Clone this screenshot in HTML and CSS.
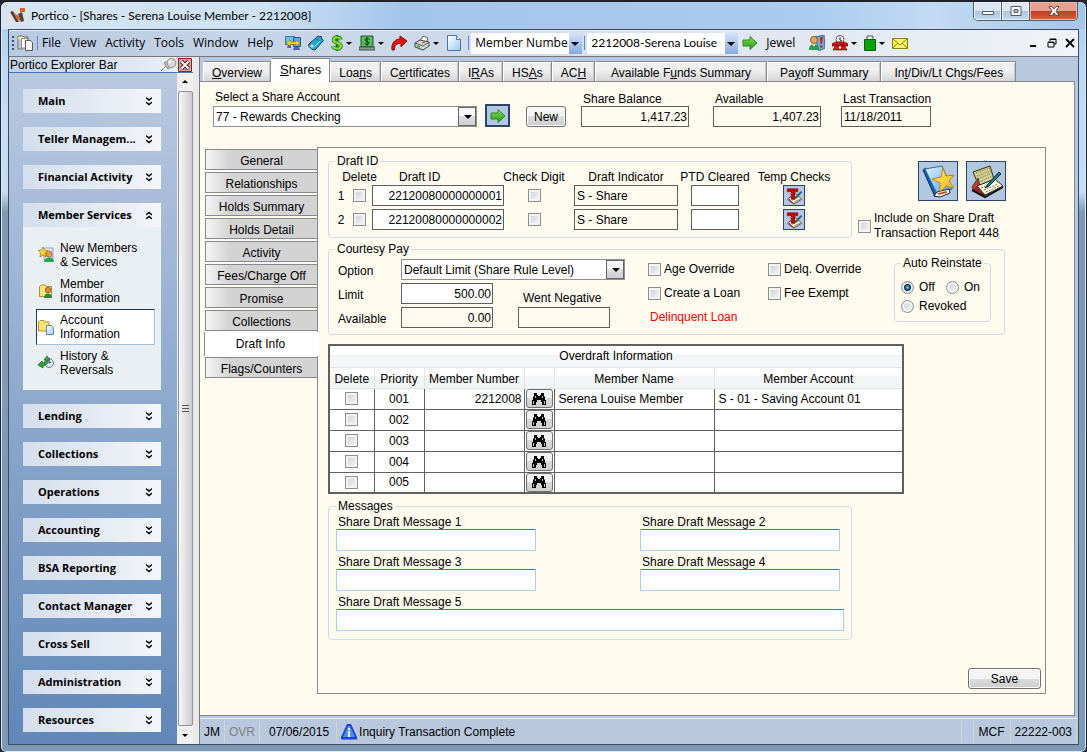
FILE: index.html
```html
<!DOCTYPE html>
<html lang="en">
<head>
<meta charset="utf-8">
<title>Portico - [Shares - Serena Louise Member - 2212008]</title>
<link rel="stylesheet" href="styles.css">
</head>
<body>
<svg class="sprites" width="0" height="0" aria-hidden="true">
  <defs>
    <linearGradient id="green" x1="0" y1="0" x2="0" y2="1"><stop offset="0" stop-color="#8ee04a"/><stop offset="1" stop-color="#1d9a1d"/></linearGradient>
    <linearGradient id="page" x1="0" y1="0" x2="1" y2="1"><stop offset="0" stop-color="#fff"/><stop offset="1" stop-color="#9fc8f4"/></linearGradient>
    <linearGradient id="book" x1="0" y1="0" x2="1" y2="1"><stop offset="0" stop-color="#e6f6ff"/><stop offset="1" stop-color="#4aa0e6"/></linearGradient>
    <linearGradient id="star" x1="0" y1="0" x2="1" y2="1"><stop offset="0" stop-color="#fff27a"/><stop offset="1" stop-color="#f4b414"/></linearGradient>
    <symbol id="i-down" viewBox="0 0 8 9"><path d="M1 0l3 2 3-2v1.500L4 4 1 1.500zM1 4.500l3 2 3-2V6L4 8.500 1 6z"/></symbol>
    <symbol id="i-up" viewBox="0 0 8 9"><path d="M1 4.500v-1.500L4 .5 7 3v1.500L4 2.500zM1 8.500V7l3-2.500L7 7v1.500L4 6.500z"/></symbol>
    <symbol id="i-go" viewBox="0 0 16 16"><path d="M1 5h7V1.500L15 8l-7 6.500V11H1z" fill="url(#green)" stroke="#2d8a2d"/></symbol>
    <symbol id="i-bino" viewBox="0 0 16 14"><path d="M3 1h3v2h1v1h2V3h1V1h3v3l1 1v3h1v5h-4v-3h-1V8H6v2H5v3H1V8h1V5l1-1z"/><path d="M4.500 4v2M2.500 9v3M11.500 4v2M13.500 9v3" stroke="#bbb" fill="none"/></symbol>
    <symbol id="i-temp" viewBox="0 0 20 20"><path d="M4 13l8-5 6 6-8 5z" fill="#fff7c4" stroke="#5b4a23"/><path d="M8 15l6-3M10 17l6-3" stroke="#8a8562"/><path d="M3 3h11v3h-3v8H7V6H3z" fill="#c80000" stroke="#7a0808" stroke-width=".6"/><path d="M11 13l7-7" stroke="#1b5e86" stroke-width="2"/><path d="M3 14l7 5" stroke="#a02020"/></symbol>
    <symbol id="i-user" viewBox="0 0 16 16"><path d="M6 1h9v12H6z" fill="url(#page)" stroke="#7693b8" stroke-width=".7"/><circle cx="11" cy="7" r="3" fill="#f09a3c" stroke="#9a5718" stroke-width=".6"/><path d="M6 15c0-6 10-6 10 0z" fill="#2fa648"/></symbol>
  </defs>
</svg>
<div class="window">
  <header class="titlebar">
    <svg class="app-icon" viewBox="0 0 16 16"><path d="M0 2h16v14H0z" fill="#e2e2e2"/><path d="M1 4l3-1 6 11H7zM9 6l4-2 2 9-3 1z" fill="#3f4650"/><path d="M5 5l5 3 2 6-4-3-3-5z" fill="#f0641e"/><path d="M11 0h5v4h-5z" fill="#f25a16"/></svg>
    <h1 class="title">Portico - [Shares - Serena Louise Member - 2212008]</h1>
    <div class="caption-buttons">
      <button class="cap" aria-label="Minimize"><svg viewBox="0 0 14 12"><path d="M1.500 6.500h11v3h-11z" fill="#fff" stroke="#555a66"/></svg></button>
      <button class="cap" aria-label="Maximize"><svg viewBox="0 0 14 12"><path d="M2 1.500h10v9H2z" fill="#fff" stroke="#555a66"/><path d="M5 4.500h4v3H5z" fill="#a8bcd4" stroke="#555a66"/></svg></button>
      <button class="cap cap-close" aria-label="Close"><svg viewBox="0 0 14 12"><path d="M2 1.500h3l2 2.500 2-2.500h3L9 6l3 4.500H9L7 8l-2 2.500H2L5 6z" fill="#fff" stroke="#6b4444"/></svg></button>
    </div>
  </header>

  <div class="client">
    <nav class="menubar">
      <span class="grip"></span>
      <svg class="icon doc-icon" viewBox="0 0 16 16"><path d="M0 4V2l2-1h4l1 1h4v3" fill="#e9e7b4" stroke="#6c6b46"/><path d="M1 4v10h5" fill="none" stroke="#7d7b55"/><path d="M4.500 3.500h6V13h-6z" fill="#fff" stroke="#888"/><path d="M8.500 5.500h5l2 2v8h-7z" fill="#fff" stroke="#5c5c5c"/></svg>
      <span class="sep"></span>
      <div class="menus">
        <button>File</button><button>View</button><button>Activity</button><button>Tools</button><button>Window</button><button>Help</button>
      </div>
      <div class="tools">
        <button aria-label="Switch workstation"><svg class="icon" viewBox="0 0 16 16"><path d="M.5 1.500h9v8h-9z" fill="#66c3fa" stroke="#3c6fa8"/><path d="M8.500 2.500h7v9h-7z" fill="#58a6f0" stroke="#31569a"/><path d="M3 10h3v3H2zM9 12h5l1 3H8z" fill="#4e62b8"/><path d="M1 8l4-3v2h6V5l4 3-4 3V9.500H5V11z" fill="#ffd91c" stroke="#9c7b00" stroke-width=".6"/></svg></button>
        <button aria-label="Calculator"><svg class="icon" viewBox="0 0 16 16"><path d="M1 9l9-8 2 1 1-1 1 3 1.500 1.500L7 15l-3-.5L.5 11z" fill="#22a5cf" stroke="#0b4b6a"/><path d="M6 12l6-6" stroke="#8be2f5"/><circle cx="4" cy="11" r="1.500" fill="#f1d8f3"/><path d="M9 4l2 2" stroke="#0b4b6a"/></svg></button>
        <button aria-label="Money"><svg class="icon icon-slim" viewBox="0 0 12 16"><path d="M6 0v16" stroke="#1f7a1f" stroke-width="2.600"/><path d="M10 5C9 2 3 1 2.500 5c0 3.500 7.500 2 7.500 6-.5 4-7.500 3-8.500 0" fill="none" stroke="#277f27" stroke-width="3.600"/><path d="M10 5C9 2 3 1 2.500 5c0 3.500 7.500 2 7.500 6-.5 4-7.500 3-8.500 0" fill="none" stroke="#8be228" stroke-width="2"/></svg><i class="caret"></i></button>
        <button aria-label="Cash drawer"><svg class="icon" viewBox="0 0 16 16"><path d="M2 1h12v11H2z" fill="#59b95d" stroke="#1b5a20"/><path d="M0 12h16v3H0z" fill="#8d9a8d" stroke="#3f4f3f"/><path d="M8 2v9M10.500 4.500C9 3 6 3.500 6 5s4 1.500 4 3-3 2-4.500.5" stroke="#053a08" fill="none"/></svg><i class="caret"></i></button>
        <button aria-label="Forward"><svg class="icon" viewBox="0 0 16 16"><path d="M1 15C0 8 4 4 9 4V1l7 5-6 6V8.500C6 8 3 10 3.500 15z" fill="#e11313" stroke="#8d0606"/></svg></button>
        <button aria-label="Print"><svg class="icon" viewBox="0 0 16 16"><path d="M6 6l3-5 5 2-2 5z" fill="#fff" stroke="#666"/><path d="M1 8l5-3 9 2v4l-6 4-8-3z" fill="#d4d4d4" stroke="#444"/><path d="M1 8l8 3 6-4" fill="none" stroke="#555"/><path d="M3 11l3 1" stroke="#28b428" stroke-width="1.500"/><path d="M8 8l3-1" stroke="#d22"/></svg><i class="caret"></i></button>
        <button aria-label="New page"><svg class="icon" viewBox="0 0 16 16"><path d="M1.500.5h9l4 4v11h-13z" fill="url(#page)" stroke="#4c73a9"/><path d="M10.500.5v4h4" fill="#fff" stroke="#4c73a9"/></svg></button>
      </div>
      <span class="sep"></span>
      <span class="combo combo-bar combo-key"><select aria-label="Search by"><option>Member Numbe</option></select></span>
      <span class="sep"></span>
      <span class="combo combo-bar combo-member"><select aria-label="Member"><option>2212008-Serena Louise</option></select></span>
      <button class="go" aria-label="Go"><svg class="icon" viewBox="0 0 16 16"><use href="#i-go"/></svg></button>
      <span class="who">Jewel</span>
      <div class="tools">
        <button aria-label="Member alert"><svg class="icon" viewBox="0 0 16 16"><path d="M6 2l9-2 1 13-6 3z" fill="#6fa9dc" stroke="#3d6796"/><path d="M11 2h3l-1 7h-1.500zM11 10.500h2.500v2H11z" fill="#dc1c1c"/><circle cx="5" cy="5" r="3.500" fill="#e9a558" stroke="#8c5a21"/><path d="M0 15c0-8 10-8 10 0z" fill="#2c9b46"/><path d="M3.500 9L5 12l1.500-3z" fill="#fff"/></svg></button>
        <button aria-label="Phone"><svg class="icon" viewBox="0 0 16 16"><circle cx="8" cy="4.500" r="4" fill="#fff" stroke="#555"/><path d="M8 2v3l2 1" stroke="#222" fill="none"/><path d="M0 9c3-3 13-3 16 0v2h-4v-1H4v1H0zM4 10h8l3 5H1z" fill="#d31111" stroke="#7d0707" stroke-width=".7"/><circle cx="8" cy="12.500" r="1.200" fill="#fff"/></svg><i class="caret"></i></button>
        <button aria-label="Bag"><svg class="icon icon-slim" viewBox="0 0 12 16"><path d="M3 4V1h6v3" fill="none" stroke="#555"/><path d="M.5 4.500h11v11H.5z" fill="#0ba20b" stroke="#056305"/></svg><i class="caret"></i></button>
        <button aria-label="Mail"><svg class="icon" viewBox="0 0 16 16"><path d="M.5 3.500h15v10H.5z" fill="#fff56a" stroke="#8a8100"/><path d="M1 4l7 6 7-6M1 13l5-5M15 13l-5-5" fill="none" stroke="#8a8100"/></svg></button>
      </div>
      <div class="mdi">
        <button aria-label="Minimize document"><svg viewBox="0 0 10 10"><path d="M1 7h6v2H1z"/></svg></button>
        <button aria-label="Restore document"><svg viewBox="0 0 10 10"><path d="M3 3V1h6v5H7M3 1.500h6M1 4h6v5H1zM1 4.500h6" fill="none" stroke="#000"/></svg></button>
        <button aria-label="Close document"><svg viewBox="0 0 10 10"><path d="M1 1l8 8M9 1L1 9" fill="none" stroke="#000" stroke-width="1.800"/></svg></button>
      </div>
    </nav>

    <div class="body">
      <aside class="explorer">
        <div class="explorer-head">
          <h2>Portico Explorer Bar</h2>
          <button class="pin" aria-label="Pin"><svg viewBox="0 0 16 14"><path d="M0 13l5-5" stroke="#888"/><path d="M3 5l4 6c2-1 3-2 3-4L6 4C5 4 4 4 3 5z" fill="#c9c9c9" stroke="#888"/><circle cx="10.500" cy="5" r="4.500" fill="#d9d9d9" stroke="#8a8a8a"/><circle cx="9" cy="3.500" r="1.500" fill="#fff"/></svg></button>
          <button class="x" aria-label="Close explorer"><svg viewBox="0 0 14 14"><path d="M.5.500h13v13H.5z" fill="#d99c98" stroke="#7d2720"/><path d="M3.500 3.500l7 7M10.500 3.500l-7 7" stroke="#4a1a18" stroke-width="4"/><path d="M3.500 3.500l7 7M10.500 3.500l-7 7" stroke="#fff" stroke-width="2"/></svg></button>
        </div>
        <div class="explorer-main">
          <div class="groups">
            <button class="group">Main<svg><use href="#i-down"/></svg></button>
            <button class="group">Teller Managem...<svg><use href="#i-down"/></svg></button>
            <button class="group">Financial Activity<svg><use href="#i-down"/></svg></button>
            <div class="open">
              <button class="group">Member Services<svg><use href="#i-up"/></svg></button>
              <ul class="links">
                <li><a href="#"><svg class="icon" viewBox="0 0 16 16"><use href="#i-user"/><path d="M5 0l1.500 3L10 3.500 7.500 6l.5 4-3-2-3 2 .5-4L0 3.500 3.500 3z" fill="url(#star)" stroke="#a06c00" stroke-width=".7"/></svg><span>New Members<br>&amp; Services</span></a></li>
                <li><a href="#"><svg class="icon" viewBox="0 0 16 16"><path d="M1.500 3.500l2-1.500h4l1 1.500h5v10h-12z" fill="#ffe680" stroke="#b39122"/><circle cx="10" cy="7" r="2.800" fill="#d8893a" stroke="#72411b" stroke-width=".6"/><path d="M6 15c0-6 8-6 8 0z" fill="#238c36"/></svg><span>Member<br>Information</span></a></li>
                <li><a href="#" class="current"><svg class="icon" viewBox="0 0 16 16"><path d="M.5 3L2 1.500h4L7 3h4v9H.5z" fill="#ffe27a" stroke="#b39122"/><path d="M8.500 6.500h5l2 2v7h-7z" fill="url(#page)" stroke="#5d86b8"/></svg><span>Account<br>Information</span></a></li>
                <li><a href="#"><svg class="icon" viewBox="0 0 16 16"><circle cx="11" cy="8" r="4.500" fill="#dfe6ee" stroke="#6b7988"/><path d="M11 5v3l2-1" fill="none" stroke="#334"/><path d="M0 10l4-4 1 2c3 0 3-2 3-3H6l3-4 3 4h-2c0 4-2 5-5 6v2z" fill="#31a53c" stroke="#14661d" stroke-width=".7"/></svg><span>History &amp;<br>Reversals</span></a></li>
              </ul>
            </div>
            <button class="group">Lending<svg><use href="#i-down"/></svg></button>
            <button class="group">Collections<svg><use href="#i-down"/></svg></button>
            <button class="group">Operations<svg><use href="#i-down"/></svg></button>
            <button class="group">Accounting<svg><use href="#i-down"/></svg></button>
            <button class="group">BSA Reporting<svg><use href="#i-down"/></svg></button>
            <button class="group">Contact Manager<svg><use href="#i-down"/></svg></button>
            <button class="group">Cross Sell<svg><use href="#i-down"/></svg></button>
            <button class="group">Administration<svg><use href="#i-down"/></svg></button>
            <button class="group">Resources<svg><use href="#i-down"/></svg></button>
          </div>
          <div class="scroll"><i class="caret caret-up"></i><div class="thumb"><span class="ridges"></span></div><i class="caret"></i></div>
        </div>
      </aside>

      <div class="work">
        <nav class="tabs">
          <button><u>O</u>verview</button><button class="active"><u>S</u>hares</button><button>Loa<u>n</u>s</button><button>C<u>e</u>rtificates</button><button>I<u>R</u>As</button><button>HS<u>A</u>s</button><button>AC<u>H</u></button><button>Available F<u>u</u>nds Summary</button><button>Pa<u>y</u>off Summary</button><button>In<u>t</u>/Div/Lt Chgs/Fees</button>
        </nav>
        <main class="sheet">
          <section class="account">
            <div class="field account-pick">
              <label for="acct">Select a Share Account</label>
              <span class="combo"><select id="acct"><option>77 - Rewards Checking</option></select></span>
            </div>
            <button class="tile tile-go" aria-label="Go to account"><svg class="icon" viewBox="0 0 16 16"><use href="#i-go"/></svg></button>
            <button class="btn">New</button>
            <div class="balances">
              <div class="field"><label for="bal">Share Balance</label><input id="bal" class="box money ro" readonly value="1,417.23"></div>
              <div class="field"><label for="avail">Available</label><input id="avail" class="box money ro" readonly value="1,407.23"></div>
              <div class="field last"><label for="last">Last Transaction</label><input id="last" class="box ro" readonly value="11/18/2011"></div>
            </div>
          </section>

          <div class="detail">
            <nav class="side-tabs">
              <button>General</button><button>Relationships</button><button>Holds Summary</button><button>Holds Detail</button><button>Activity</button><button>Fees/Charge Off</button><button>Promise</button><button>Collections</button><button class="active">Draft Info</button><button>Flags/Counters</button>
            </nav>
            <section class="panel">
              <div class="top">
                <fieldset class="draft">
                  <legend>Draft ID</legend>
                  <div class="draft-grid">
                    <span></span><span>Delete</span><span class="draft-label">Draft ID</span><span>Check Digit</span><span>Draft Indicator</span><span>PTD Cleared</span><span>Temp Checks</span>
                    <span>1</span><input type="checkbox" aria-label="Delete 1"><input class="box money" aria-label="Draft ID 1" value="22120080000000001"><input type="checkbox" aria-label="Check digit 1"><input class="box ro indicator" readonly aria-label="Draft indicator 1" value="S - Share"><input class="box ptd" aria-label="PTD cleared 1"><button class="tile tile-small" aria-label="Temp checks 1"><svg viewBox="0 0 20 20"><use href="#i-temp"/></svg></button>
                    <span>2</span><input type="checkbox" aria-label="Delete 2"><input class="box money" aria-label="Draft ID 2" value="22120080000000002"><input type="checkbox" aria-label="Check digit 2"><input class="box ro indicator" readonly aria-label="Draft indicator 2" value="S - Share"><input class="box ptd" aria-label="PTD cleared 2"><button class="tile tile-small" aria-label="Temp checks 2"><svg viewBox="0 0 20 20"><use href="#i-temp"/></svg></button>
                  </div>
                </fieldset>
                <div class="report">
                  <div class="report-tiles">
                    <button class="tile tile-big" aria-label="Favorites"><svg viewBox="0 0 38 38"><path d="M4 8l3-2 11 24-2 5z" fill="#155eac" stroke="#0d2f5c"/><path d="M6 7l17-3 10 23-15 5z" fill="url(#book)" stroke="#2a6db0"/><path d="M15 34l3-4 12-3 1 4-10 4z" fill="#fff" stroke="#222"/><path d="M19 32l9-2" stroke="#b8593b" stroke-width="2"/><path d="M24 6l3 8 8-1-5 6 5 7-8-2-6 6v-9l-8-4 9-2z" fill="url(#star)" stroke="#c08212"/></svg></button>
                    <button class="tile tile-big" aria-label="Write check"><svg viewBox="0 0 38 38"><path d="M6 10l17-6 4 13-15 7z" fill="#d2cf96" stroke="#2f2f16"/><path d="M9 11l14-5M10 14l14-5M11 17l14-6M12 20l14-6" stroke="#77743f" stroke-dasharray="1 1"/><path d="M5 25l6-9 2 8-6 5z" fill="#d33030" stroke="#206020"/><path d="M6 27l9-4 10 7-8 4z" fill="#a02020"/><path d="M10 24l18-7 8 7-18 9z" fill="#ffffd8" stroke="#222"/><path d="M5 28l13 7 18-10" fill="none" stroke="#111" stroke-width="2"/><path d="M14 26l10-4M17 28l14-6M19 30l13-6" stroke="#777" stroke-dasharray="2 1"/><path d="M18 26l3-4L32 10l2 2-12 12z" fill="#178a7d" stroke="#101c66"/></svg></button>
                  </div>
                  <label class="check report-check"><input type="checkbox"><span>Include on Share Draft<br>Transaction Report 448</span></label>
                </div>
              </div>

              <fieldset class="courtesy">
                <legend>Courtesy Pay</legend>
                <div class="pay">
                  <label for="opt">Option</label>
                  <span class="combo pay-option"><select id="opt"><option>Default Limit (Share Rule Level)</option></select></span>
                  <label for="limit">Limit</label><input id="limit" class="box money" value="500.00">
                  <label for="neg" class="went">Went Negative</label>
                  <label for="cpav">Available</label><input id="cpav" class="box money ro" readonly value="0.00">
                  <input id="neg" class="box ro neg" readonly>
                </div>
                <div class="flags">
                  <label class="check"><input type="checkbox">Age Override</label>
                  <label class="check"><input type="checkbox">Delq. Override</label>
                  <label class="check"><input type="checkbox">Create a Loan</label>
                  <label class="check"><input type="checkbox">Fee Exempt</label>
                  <span class="alert">Delinquent Loan</span>
                </div>
                <fieldset class="reinstate">
                  <legend>Auto Reinstate</legend>
                  <div class="radios">
                    <label class="check"><input type="radio" name="re" checked>Off</label>
                    <label class="check"><input type="radio" name="re">On</label>
                    <label class="check"><input type="radio" name="re">Revoked</label>
                  </div>
                </fieldset>
              </fieldset>

              <table class="overdraft">
                <colgroup><col class="c-del"><col class="c-pri"><col class="c-num"><col class="c-find"><col class="c-name"><col class="c-acct"></colgroup>
                <thead>
                  <tr><th colspan="6">Overdraft Information</th></tr>
                  <tr><th>Delete</th><th>Priority</th><th>Member Number</th><th></th><th>Member Name</th><th>Member Account</th></tr>
                </thead>
                <tbody>
                  <tr><td><input type="checkbox" aria-label="Delete 001"></td><td>001</td><td class="num">2212008</td><td><button class="find" aria-label="Find"><svg><use href="#i-bino"/></svg></button></td><td class="txt">Serena Louise Member</td><td class="txt">S - 01 - Saving Account 01</td></tr>
                  <tr><td><input type="checkbox" aria-label="Delete 002"></td><td>002</td><td></td><td><button class="find" aria-label="Find"><svg><use href="#i-bino"/></svg></button></td><td></td><td></td></tr>
                  <tr><td><input type="checkbox" aria-label="Delete 003"></td><td>003</td><td></td><td><button class="find" aria-label="Find"><svg><use href="#i-bino"/></svg></button></td><td></td><td></td></tr>
                  <tr><td><input type="checkbox" aria-label="Delete 004"></td><td>004</td><td></td><td><button class="find" aria-label="Find"><svg><use href="#i-bino"/></svg></button></td><td></td><td></td></tr>
                  <tr><td><input type="checkbox" aria-label="Delete 005"></td><td>005</td><td></td><td><button class="find" aria-label="Find"><svg><use href="#i-bino"/></svg></button></td><td></td><td></td></tr>
                </tbody>
              </table>

              <fieldset class="messages">
                <legend>Messages</legend>
                <div class="message-grid">
                  <div class="message"><label for="m1">Share Draft Message 1</label><input id="m1"></div>
                  <div class="message"><label for="m2">Share Draft Message 2</label><input id="m2"></div>
                  <div class="message"><label for="m3">Share Draft Message 3</label><input id="m3"></div>
                  <div class="message"><label for="m4">Share Draft Message 4</label><input id="m4"></div>
                  <div class="message wide"><label for="m5">Share Draft Message 5</label><input id="m5"></div>
                </div>
              </fieldset>
              <button class="btn save">Save</button>
            </section>
          </div>
        </main>
        <footer class="status">
          <span>JM</span><span class="off">OVR</span><span class="date">07/06/2015</span>
          <span class="note"><svg class="icon" viewBox="0 0 16 16"><path d="M6 0h4l6 13v2.500H0V13z" fill="#1746d8"/><path d="M7 2h2l5 11H2z" fill="#4f8df5"/><path d="M7 7h2v6H7zM7 4h2v2H7z" fill="#fff"/></svg>Inquiry Transaction Complete</span>
          <span class="blank"></span><span class="wide-cell">MCF</span><span>22222-003</span>
        </footer>
      </div>
    </div>
  </div>
</div>
</body>
</html>
```
FILE: styles.css
```css
* { box-sizing: border-box; }
body {
  margin: 0;
  font: 12px/14px "Liberation Sans", Arial, sans-serif;
  color: #000;
  background: #23272e;
}
button, input, select { font: inherit; color: inherit; margin: 0; }
button { padding: 0; border: 0; background: none; }
svg { display: block; flex: none; }
.sprites { position: absolute; }
.icon { width: 16px; height: 16px; }
.icon-slim { width: 12px; }

/* window frame */
.window {
  min-height: 100vh;
  display: flex;
  flex-direction: column;
  padding: 0 7px 7px;
  border: 1px solid #1e232b;
  border-top-width: 2px;
  border-radius: 7px 7px 6px 6px;
  background: linear-gradient(#a9c8ea 0, #bcd9f5 60px, #c5def6 190px, #8199b4 210px, #7e99b5 100%);
  box-shadow: inset 0 0 0 1px #d9e9f8;
}
.titlebar { display: flex; align-items: center; height: 27px; margin: 0 -6px; padding-left: 7px; background: linear-gradient(90deg, #d6e4f3 0, #cfe2f5 260px, #a4c5ea 400px, #abccee 75%, #c3daf2 86%, #a5c5e8 100%); border-radius: 6px 6px 0 0; }
.app-icon { width: 16px; height: 16px; margin-right: 6px; }
.title { margin: 0; font: 12px/16px Lato, "Noto Sans", sans-serif; }
.caption-buttons { display: flex; align-self: flex-start; margin: 0 7px 0 auto; height: 19px; border: 1px solid #4d5f75; border-top: 0; border-radius: 0 0 5px 5px; overflow: hidden; }
.cap { display: grid; place-items: center; width: 28px; border-right: 1px solid #4d5f75; background: linear-gradient(#dde8f4 50%, #adc4dd 50%, #c4d9ee); box-shadow: inset 0 0 0 1px #e8f1fa; }
.cap svg { width: 14px; height: 12px; }
.cap-close { width: 47px; border: 0; background: linear-gradient(#e5a090 50%, #c23a22 50%, #d8633c); box-shadow: inset 0 0 0 1px #eab9a8; }
.client { flex: 1; display: flex; flex-direction: column; border: 1px solid #3f4c5c; background: #b8c9df; }

/* menu bar */
.menubar { display: flex; align-items: center; height: 27px; padding-left: 3px; border-bottom: 1px solid #777; background: linear-gradient(90deg, #b8cae2, #f0f3f7); font: 12px/16px "Open Sans", "Noto Sans", sans-serif; box-shadow: inset 0 1px #e4edf7; }
.grip { width: 2px; height: 15px; background: repeating-linear-gradient(#34507f 0 2px, #0000 2px 4px); margin-right: 3px; }
.doc-icon { margin-right: 2px; }
.sep { width: 1px; height: 14px; margin: 0 2px; background: #5d8ac6; }
.menus { display: flex; gap: 9px; padding: 0 12px 0 2px; }
.tools, .tools button { display: flex; align-items: center; }
.tools { gap: 7px; padding-right: 4px; }
.tools button { gap: 3px; }
.caret { width: 0; border: 3px solid #0000; border-top: 3px solid #000; border-bottom: 0; }
.caret-up { transform: rotate(180deg); }
.combo { position: relative; display: block; height: 21px; }
.combo select { width: 100%; height: 100%; appearance: none; padding: 0 20px 0 2px; border: 1px solid #8d9096; border-radius: 0; background: #fff; outline: 0; }
.combo::before { content: ""; position: absolute; z-index: 1; top: 1px; right: 1px; bottom: 1px; width: 16px; border: 1px solid #666; background: linear-gradient(#f6f6f6 50%, #ddd 50%, #cfcfcf); pointer-events: none; }
.combo::after { content: ""; position: absolute; z-index: 2; top: 9px; right: 5px; border: 4px solid #0000; border-top-color: #000; border-bottom: 0; pointer-events: none; }
.combo-bar select { border: 0; padding: 0 14px 0 4px; }
.combo-bar::before { top: 0; right: 0; bottom: 0; width: 13px; border: 0; background: linear-gradient(#d4e3fa, #86abe0); }
.combo-bar::after { right: 3px; }
.combo-key { width: 111px; }
.combo-member { width: 151px; }
.combo-member select { font-family: Lato, "Noto Sans", sans-serif; }
.go { margin: 0 8px 0 4px; }
.who { margin-right: 14px; }
.mdi { display: flex; gap: 8px; margin-left: auto; padding-right: 3px; }
.mdi svg { width: 10px; height: 10px; }

/* explorer */
.body { flex: 1; display: flex; gap: 6px; background: #e9e9e9; }
.explorer { flex: none; width: 184px; display: flex; flex-direction: column; }
.explorer-head { display: flex; align-items: center; height: 16px; padding: 0 1px; border-bottom: 1px solid #4a78b5; background: linear-gradient(90deg, #c2d2e7, #eef2f8); }
.explorer-head h2 { margin: 0 auto 0 0; font: inherit; }
.pin svg { width: 16px; height: 14px; margin-right: 1px; }
.x svg { width: 14px; height: 14px; }
.explorer-main { flex: 1; display: flex; }
.groups { flex: 1; display: flex; flex-direction: column; gap: 14px; padding: 16px 16px 12px 14px; background: linear-gradient(#b9c9e0, #6087b8); }
.group { display: flex; align-items: center; justify-content: space-between; width: 100%; height: 24px; padding: 0 8px 0 15px; background: linear-gradient(90deg, #d4deec, #f3f5f9); font: bold 11px/14px "Open Sans", "Noto Sans", sans-serif; }
.group svg { width: 8px; height: 9px; }
.open { background: #e9eff2; }
.links { list-style: none; margin: 0; padding: 10px 6px 9px 13px; }
.links a { display: flex; gap: 6px; align-items: center; height: 36px; padding: 0 1px; border: 1px solid #0000; color: inherit; text-decoration: none; }
.links .current { background: #fff; border-color: #26374d #a9bedb #a9bedb #26374d; }
.scroll { width: 16px; display: flex; flex-direction: column; align-items: center; padding: 7px 0; gap: 8px; background: #efefef; }
.thumb { flex: 1; display: grid; place-items: center; width: 15px; border: 1px solid #8f9298; border-radius: 2px; background: linear-gradient(90deg, #f7f7f7, #cbcbd0); }
.ridges { width: 7px; height: 7px; background: repeating-linear-gradient(#555 0 1px, #0000 1px 3px); }

/* work area */
.work { flex: 1; min-width: 0; display: flex; flex-direction: column; border-left: 1px solid #777; background: #b8c9df; }
.tabs { display: flex; align-items: flex-end; height: 24px; padding: 1px 0 0 3px; }
.tabs button { height: 21px; margin-bottom: -1px; padding: 2px 8px 0; border: 1px solid #858992; border-left-color: #fff; border-bottom: 0; box-shadow: inset 0 1px #fff, inset -1px 0 #c8c8c8; background: linear-gradient(#f0f0f0 40%, #d3d3d3); white-space: nowrap; }
.tabs .active { position: relative; height: 24px; padding: 0 8px 2px; background: #fff; box-shadow: none; font-size: 13px; }
.tabs button:nth-child(8) { padding: 2px 15px 0; }
.tabs button:nth-child(n+9) { padding: 2px 12px 0; }
.sheet { flex: 1; display: flex; flex-direction: column; margin: 0 3px 2px 0; padding: 8px 28px 21px 4px; border: 1px solid #858992; border-left: 0; background: #fffbef; }
.account { display: flex; align-items: flex-end; padding-left: 9px; }
.field { display: flex; flex-direction: column; }
.field label { padding: 0 0 0 2px; }
.account-pick { width: 264px; gap: 2px; }
.tile { display: grid; place-items: center; border: 1px solid #2b4468; background: #b4c7e0; }
.tile-go { width: 25px; height: 23px; margin: 0 16px 0 8px; border-width: 2px; }
.tile-small { width: 22px; height: 21px; }
.tile-small svg { width: 20px; height: 19px; }
.tile-big { width: 40px; height: 40px; }
.tile-big svg { width: 38px; height: 38px; }
.btn { width: 40px; height: 21px; border: 1px solid #707070; border-radius: 3px; background: linear-gradient(#f4f4f4 50%, #dcdcdc 50%, #cecece); box-shadow: inset 0 0 0 1px #fbfbfb; font-size: 12px; }
.balances { display: flex; gap: 24px; margin-left: 15px; }
.balances .field { width: 108px; }
.balances .last { width: 90px; margin-left: -4px; white-space: nowrap; }
.box { width: 100%; min-width: 0; height: 21px; padding: 0 2px; border: 1px solid #5e5e5e; border-radius: 0; background: #fff; outline: 0; }
.ro { background: #fffbef; }
.money { text-align: right; padding-right: 1px; }
input[type="checkbox"], input[type="radio"] { appearance: none; flex: none; width: 13px; height: 13px; border: 1px solid #8e8f8f; background: linear-gradient(135deg, #c9ced6, #f8f8f8); box-shadow: inset 0 0 0 2px #f2f2f2; }
input[type="radio"] { border-radius: 50%; }
input[type="radio"]:checked { background: radial-gradient(circle at 50% 50%, #8fd6f5 0, #15608c 2px, #0b2b45 3px, #e8e8e8 4px); box-shadow: none; }

.detail { flex: 1; display: flex; margin-top: 20px; }
.side-tabs { flex: none; width: 113px; padding-top: 2px; }
.side-tabs button { display: block; width: 112px; height: 21px; margin: 0 0 2px 1px; padding-top: 2px; border: 1px solid #858992; border-width: 1px 0 1px 1px; background: linear-gradient(90deg, #f4f4f4, #d3d3d3 24px); }
.side-tabs .active { position: relative; width: 115px; height: 24px; margin: -1px 0 1px; padding: 0 3px 0 0; border-width: 0 0 0 1px; background: #fff; }
.panel { flex: 1; min-width: 0; display: flex; flex-direction: column; padding: 6px 4px 4px 10px; border: 1px solid #858992; }
fieldset { min-width: 0; margin: 0; padding: 0 6px; border: 1px solid #d0dbe8; border-radius: 4px; }
legend { padding: 0 2px; white-space: nowrap; }
.top { display: flex; gap: 6px; }
.draft { width: 524px; height: 84px; }
.draft-grid { display: grid; grid-template-columns: 12px 25px 132px 60px 124px 54px 104px; grid-auto-rows: 21px; row-gap: 3px; align-items: center; justify-items: center; white-space: nowrap; margin-top: -7px; }
.draft-grid > span:nth-child(-n+7) { align-self: end; margin-bottom: -2px; }
.draft-grid .draft-label { justify-self: start; padding-left: 27px; }
.indicator { width: 104px; }
.ptd { width: 48px; }
.report { width: 148px; padding-top: 7px; }
.report-tiles { display: flex; gap: 8px; justify-content: flex-end; margin-bottom: 10px; }
.check { display: flex; align-items: center; gap: 3px; }
.report-check { line-height: 15px; white-space: nowrap; }
.courtesy { display: flex; width: 677px; height: 93px; margin-top: 1px; }
.pay { display: grid; grid-template-columns: 66px 92px 25px 92px 15px; grid-auto-rows: 21px; row-gap: 3px; align-items: center; margin-top: 3px; }
.pay label { grid-column: 1; padding: 3px 0 0 3px; }
.pay .money { grid-column: 2; }
.pay .pay-option { grid-column: 2 / -1; width: 224px; }
.pay .went { grid-column: 4; padding: 8px 0 0 5px; white-space: nowrap; }
.pay .neg { grid-column: 4; }
.flags { display: grid; grid-template-columns: 120px 120px; grid-auto-rows: 24px; align-content: start; align-items: center; margin: 1px 6px 0 23px; }
.flags .alert { padding-left: 2px; color: #f00; }
.reinstate { width: 97px; height: 66px; padding: 0 6px; }
.radios { display: grid; grid-template-columns: 45px 1fr; row-gap: 5px; margin-top: 10px; white-space: nowrap; }
.radios .check { gap: 5px; }
.radios .check:last-child { grid-column: 1 / -1; }

.overdraft { width: 576px; margin: 9px 0 0; table-layout: fixed; border-collapse: collapse; border: 2px solid #606060; background: #fff; text-align: center; }
.overdraft th { height: 22px; padding: 0; font-weight: normal; border: 1px solid #e2e4e8; background: linear-gradient(#fff 40%, #f4f5f7 41%, #f3f4f6); }
.overdraft thead tr:last-child th { height: 21px; padding-top: 2px; }
.overdraft td { height: 21px; padding: 0; border: 1px solid #606060; }
.overdraft input { display: block; margin: 0 auto; }
.overdraft .num { text-align: right; padding-right: 2px; }
.overdraft .txt { text-align: left; padding-left: 4px; }
.c-del { width: 45px; } .c-pri { width: 50px; } .c-num { width: 100px; } .c-find { width: 30px; } .c-name { width: 160px; }
.find { display: grid; place-items: center; width: 27px; height: 19px; margin: 0 auto; border: 1px solid #707070; border-radius: 3px; background: linear-gradient(#f2f2f2 50%, #d8d8d8 50%, #d0d0d0); }
.find svg { width: 16px; height: 14px; }

.messages { width: 524px; height: 141px; margin-top: 5px; padding: 0 7px; }
.message-grid { display: grid; grid-template-columns: 200px 204px; justify-content: space-between; row-gap: 4px; margin-top: 2px; }
.message label { display: block; padding-left: 2px; }
.message input { display: block; width: 200px; height: 22px; border: 1px solid #abcfe8; border-top-color: #3d7bad; border-radius: 1px; background: #fff; outline: 0; }
.message.wide { grid-column: 1 / -1; }
.wide input { width: 100%; }
.save { width: 73px; margin: auto 0 0 auto; }

.status { display: flex; align-items: center; height: 26px; border-top: 1px solid #eef2f8; padding: 2px 1px 2px 0; }
.status > span { display: flex; align-items: center; height: 22px; padding: 0 4px; border-right: 1px solid #d3d3cf; }
.status .off { color: #808080; }
.status .date { padding: 0 7px 0 9px; }
.status .note { flex: 1; gap: 2px; }
.status .blank { width: 12px; padding: 0; }
.status .wide-cell { padding: 0 5px; }
```
